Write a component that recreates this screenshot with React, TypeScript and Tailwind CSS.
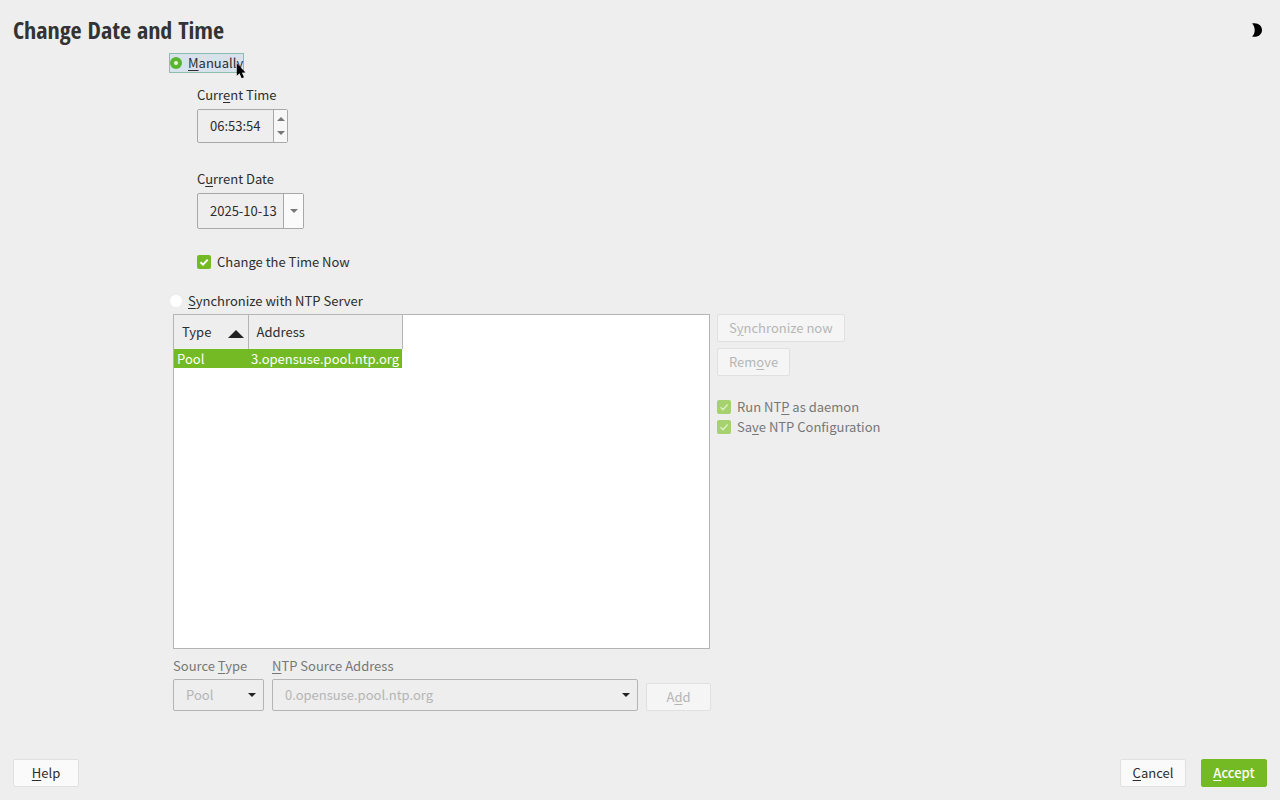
import { useState } from 'react';
import type { ReactNode } from 'react';

type NtpServer = {
  type: string;
  address: string;
};

const servers: NtpServer[] = [{ type: 'Pool', address: '3.opensuse.pool.ntp.org' }];

// Renders a label with its keyboard accelerator underlined, e.g. "Curr&ent Time"
function Mnemonic({ text }: { text: string }): ReactNode {
  const [before, after] = text.split('&');
  if (after === undefined) return text;
  return (
    <span>
      {before}
      <span className="underline decoration-1 underline-offset-2">{after[0]}</span>
      {after.slice(1)}
    </span>
  );
}

function Button({ text, disabled, primary }: { text: string; disabled?: boolean; primary?: boolean }) {
  if (primary) {
    return (
      <button
        type="button"
        className="h-7 rounded-xs border border-[#73ba25] bg-[#73ba25] px-[11px] font-medium text-white"
      >
        <Mnemonic text={text} />
      </button>
    );
  }
  return (
    <button
      type="button"
      disabled={disabled}
      className="h-7 rounded-xs border border-[#e0e0e0] bg-[#fafafa] px-[11px] disabled:bg-[#f5f5f5] disabled:text-[#b5b5b5]"
    >
      <Mnemonic text={text} />
    </button>
  );
}

function Checkbox({ text, disabled }: { text: string; disabled?: boolean }) {
  const [checked, setChecked] = useState(true);
  return (
    <label className={disabled ? 'flex items-center gap-1.5 text-[#777777]' : 'flex items-center gap-1.5'}>
      <span className="relative flex size-3.5">
        <input
          type="checkbox"
          checked={checked}
          disabled={disabled}
          onChange={(e) => setChecked(e.target.checked)}
          className="size-3.5 appearance-none rounded-xs bg-white checked:bg-[#73ba25] disabled:checked:bg-[#a5d16f]"
        />
        {checked && (
          <svg viewBox="0 0 14 14" className="pointer-events-none absolute inset-0 size-3.5" fill="none">
            <path
              d="M3.5 7.2 6 9.6 10.7 4.6"
              stroke={disabled ? '#d9efc0' : '#ffffff'}
              strokeWidth={disabled ? 1.5 : 2}
            />
          </svg>
        )}
      </span>
      <Mnemonic text={text} />
    </label>
  );
}

function Radio({ text, checked, onSelect }: { text: string; checked: boolean; onSelect: () => void }) {
  return (
    <label
      className={
        checked
          ? 'flex h-5 w-fit items-center gap-1.5 border border-[#8fbcb0] bg-[#d7e2ec]'
          : 'flex h-5 w-fit items-center gap-1.5 border border-transparent'
      }
    >
      <span className="relative flex size-3">
        <input
          type="radio"
          name="mode"
          checked={checked}
          onChange={onSelect}
          className="size-3 appearance-none rounded-full bg-white checked:bg-[#5cb531]"
        />
        {checked && <span className="pointer-events-none absolute top-1 left-1 size-1 rounded-full bg-[#e9f7dd]" />}
      </span>
      <Mnemonic text={text} />
    </label>
  );
}

function Arrow({ up, className }: { up?: boolean; className: string }) {
  return (
    <svg viewBox="0 0 8 4" className={className} fill="currentColor">
      <path d={up ? 'M0 4 4 0l4 4z' : 'M0 0h8L4 4z'} />
    </svg>
  );
}

function Combo({ id, value }: { id: string; value: string }) {
  return (
    <div className="relative flex">
      <select
        id={id}
        disabled
        className="h-8 w-full appearance-none rounded-xs border border-[#b4b4b4] px-3 text-[#b5b5b5] opacity-100"
      >
        <option>{value}</option>
      </select>
      <Arrow className="pointer-events-none absolute top-3.5 right-2 h-1 w-2 text-[#222222]" />
    </div>
  );
}

export default function App() {
  const [mode, setMode] = useState('manual');
  const [time, setTime] = useState('06:53:54');
  const [date, setDate] = useState('2025-10-13');

  return (
    <div className="flex min-h-screen flex-col bg-[#eeeeee] px-[13px] pb-[13px] font-['Noto_Sans_CJK_SC','Open_Sans',sans-serif] text-[13px] leading-5 text-[#2d2d2d]">
      <header className="flex items-center justify-between pt-3">
        <h1 className="font-['Open_Sans_Condensed','Noto_Sans_Condensed','Liberation_Sans_Narrow',sans-serif] text-2xl leading-9 font-bold text-[#333333]">
          Change Date and Time
        </h1>
        <button type="button" aria-label="Toggle dark theme" className="pr-1">
          <svg viewBox="0 0 12 14" className="h-3.5 w-3" fill="#000000">
            <path d="M1 .4C7-.8 11 2.500 11 7s-4 7.800-10 6.600C4.600 10.500 4.600 3.500 1 .4z" />
          </svg>
        </button>
      </header>

      <main className="mx-auto flex w-full max-w-[942px] flex-1 flex-col pt-[5px]">
        <div className="relative w-fit">
          <Radio text="&Manually" checked={mode === 'manual'} onSelect={() => setMode('manual')} />
          <svg viewBox="0 0 10 16" className="pointer-events-none absolute top-2.5 left-[67px] h-4 w-2.5">
            <path d="M.8.5v12.300l2.700-2.500 2.200 4.900 2.300-1-2.200-4.700h3.700z" fill="#000000" />
          </svg>
        </div>

        <div className="flex flex-col items-start pl-7">
          <label htmlFor="time" className="mt-3">
            <Mnemonic text="Curr&ent Time" />
          </label>
          <div className="mt-1 flex h-[34px] rounded-xs border border-[#a8a8a8]">
            <input
              id="time"
              value={time}
              onChange={(e) => setTime(e.target.value)}
              className="w-[76px] border-r border-[#a8a8a8] pl-3 outline-none"
            />
            <div className="flex w-[13px] flex-col bg-[#f7f7f7] py-0.5 text-[#777777]">
              <button type="button" aria-label="Increase" className="flex flex-1 items-center justify-center">
                <Arrow up className="h-1 w-2" />
              </button>
              <button type="button" aria-label="Decrease" className="flex flex-1 items-center justify-center">
                <Arrow className="h-1 w-2" />
              </button>
            </div>
          </div>

          <label htmlFor="date" className="mt-[26px]">
            <Mnemonic text="C&urrent Date" />
          </label>
          <div className="mt-1 flex h-9 rounded-xs border border-[#a8a8a8]">
            <input
              id="date"
              value={date}
              onChange={(e) => setDate(e.target.value)}
              className="w-[86px] border-r border-[#a8a8a8] pl-3 outline-none"
            />
            <button
              type="button"
              aria-label="Open calendar"
              className="flex w-[19px] items-center justify-center bg-[#fafafa] text-[#777777]"
            >
              <Arrow className="h-1 w-2" />
            </button>
          </div>

          <div className="mt-[23px]">
            <Checkbox text="Change the Time Now" />
          </div>
        </div>

        <div className="mt-[19px]">
          <Radio text="&Synchronize with NTP Server" checked={mode === 'ntp'} onSelect={() => setMode('ntp')} />
        </div>

        <div className="mt-[3px] flex flex-1 gap-[7px] pl-1">
          <div className="w-full max-w-[537px] border border-[#b4b4b4] bg-white">
            <table className="border-collapse text-left">
              <thead>
                <tr className="h-[34px] bg-[#eeeeee]">
                  <th className="w-[74px] border-r border-[#b4b4b4] px-2 font-normal">
                    <span className="flex items-center justify-between">
                      Type
                      <Arrow up className="-mr-1 mt-1 h-2 w-4 text-[#222222]" />
                    </span>
                  </th>
                  <th className="w-[150px] border-r border-[#b4b4b4] px-2 font-normal">Address</th>
                </tr>
              </thead>
              <tbody>
                {servers.map((server) => (
                  <tr key={server.address} className="bg-[#73ba25] text-white">
                    <td className="h-[19px] px-[3px] leading-[19px]">{server.type}</td>
                    <td className="h-[19px] px-[3px] leading-[19px]">{server.address}</td>
                  </tr>
                ))}
              </tbody>
            </table>
          </div>
          <div className="flex flex-none flex-col items-start">
            <Button text="S&ynchronize now" disabled />
            <div className="mt-1.5 mb-[21px] flex">
              <Button text="Rem&ove" disabled />
            </div>
            <Checkbox text="Run NT&P as daemon" disabled />
            <Checkbox text="Sa&ve NTP Configuration" disabled />
          </div>
        </div>

        <div className="mt-[7px] flex w-full max-w-[542px] items-end gap-2 pl-1 text-[#777777]">
          <div className="flex w-[91px] flex-col gap-[3px]">
            <label htmlFor="source-type">
              <Mnemonic text="Source &Type" />
            </label>
            <Combo id="source-type" value="Pool" />
          </div>
          <div className="flex flex-1 flex-col gap-[3px]">
            <label htmlFor="source-address">
              <Mnemonic text="&NTP Source Address" />
            </label>
            <Combo id="source-address" value="0.opensuse.pool.ntp.org" />
          </div>
          <div className="flex w-[65px] flex-col">
            <Button text="A&dd" disabled />
          </div>
        </div>
      </main>

      <footer className="flex gap-[15px] pt-12">
        <div className="mr-auto flex w-[66px] flex-col">
          <Button text="&Help" />
        </div>
        <div className="flex w-[66px] flex-col">
          <Button text="&Cancel" />
        </div>
        <div className="flex w-[66px] flex-col">
          <Button text="&Accept" primary />
        </div>
      </footer>
    </div>
  );
}
